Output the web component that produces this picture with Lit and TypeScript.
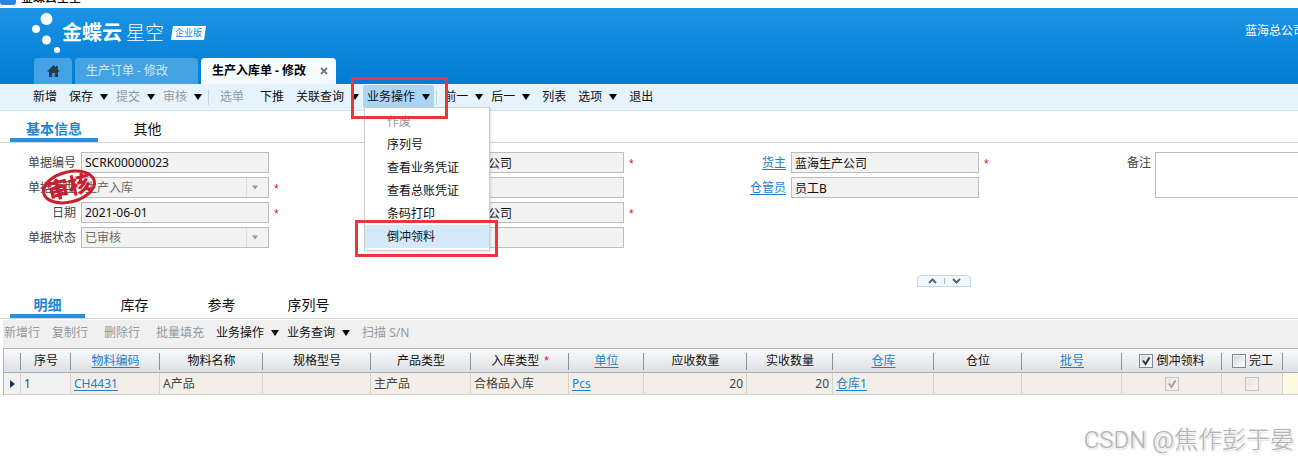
import { LitElement, html, css, nothing } from "lit";
import { customElement, property } from "lit/decorators.js";
import { classMap } from "lit/directives/class-map.js";

const base = css`
  * { box-sizing: border-box; }
  button, input, select, textarea { font: inherit; color: inherit; margin: 0; border-radius: 0; }
  button { background: none; border: 0; padding: 0; cursor: pointer; white-space: nowrap; }
  a { color: #1a82d2; text-decoration: underline; text-underline-offset: 2px; }
`;

interface Command { label: string; drop?: boolean; off?: boolean; sep?: boolean; open?: boolean; tight?: boolean; }

const COMMANDS: Command[] = [
  { label: "新增" },
  { label: "保存", drop: true },
  { label: "提交", drop: true, off: true },
  { label: "审核", drop: true, off: true },
  { label: "", sep: true },
  { label: "选单", off: true },
  { label: "下推" },
  { label: "关联查询", drop: true },
  { label: "业务操作", drop: true, open: true },
  { label: "", sep: true },
  { label: "前一", drop: true },
  { label: "后一", drop: true },
  { label: "列表" },
  { label: "选项", drop: true },
  { label: "退出" },
];

const ROW_COMMANDS: Command[] = [
  { label: "新增行", off: true, tight: true },
  { label: "复制行", off: true },
  { label: "删除行", off: true },
  { label: "批量填充", off: true },
  { label: "业务操作", drop: true },
  { label: "业务查询", drop: true },
  { label: "扫描 S/N", off: true },
];

const MENU = ["作废", "序列号", "查看业务凭证", "查看总账凭证", "条码打印", "倒冲领料"];

@customElement("command-bar")
class CommandBar extends LitElement {
  @property({ attribute: false }) commands: Command[] = [];

  static styles = [base, css`
    :host { display: flex; align-items: center; }
    .cmd { display: flex; align-items: center; gap: 7px; height: 23px; padding: 0 4px; border-radius: 3px; line-height: 24px; }
    .plain { margin: 0 4px; }
    .tight { margin: 0; }
    .off { color: #93999f; }
    .open { background: #abd5f3; }
    .arrow { width: 8px; height: 6px; fill: #000; }
    .sep { width: 1px; height: 15px; margin: 0 3px 0 2px; background: #c5d3de; align-self: center; }
    .holder { position: relative; }
    .menu { position: absolute; z-index: 2; left: 1px; top: 22px; width: 126px; margin: 0; padding: 2px 0; list-style: none; background: #fff; border: 1px solid #c9ced2; box-shadow: 1px 1px 2px rgba(0, 0, 0, .12); }
    .item { position: relative; height: 23px; }
    .item button { width: 100%; height: 23px; padding-left: 22px; text-align: left; line-height: 23px; }
    .current { background: #d4eafa; }
    .mark { position: absolute; z-index: 3; border: 3px solid #e53935; pointer-events: none; }
    .mark-command { left: -12px; top: -8px; width: 97px; height: 42px; }
    .mark-item { left: -10px; top: -5px; width: 143px; height: 37px; }
  `];

  private button(c: Command) {
    return html`<button class=${classMap({ cmd: true, plain: !c.drop, tight: !!c.tight, off: !!c.off, open: !!c.open })}>
      ${c.label}${c.drop ? html`<svg class="arrow" viewBox="0 0 8 6"><path d="M0 0h8L4 6z"/></svg>` : nothing}
    </button>`;
  }

  render() {
    return this.commands.map((c) => {
      if (c.sep) return html`<span class="sep"></span>`;
      if (!c.open) return this.button(c);
      return html`<div class="holder">
        ${this.button(c)}
        <ul class="menu">
          ${MENU.map((m, i) => html`<li class=${classMap({ item: true, off: i === 0, current: i === MENU.length - 1 })}>
            <button>${m}</button>${i === MENU.length - 1 ? html`<span class="mark mark-item"></span>` : nothing}
          </li>`)}
        </ul>
        <span class="mark mark-command"></span>
      </div>`;
    });
  }
}

@customElement("section-tabs")
class SectionTabs extends LitElement {
  @property({ attribute: false }) tabs: string[] = [];

  static styles = [base, css`
    :host { display: flex; gap: 12px; padding: 0 10px; border-bottom: 1px solid #d3d3d3; }
    .tab { min-width: 75px; height: 22px; padding: 0 16px; font-size: 14px; line-height: 18px; border-bottom: 4px solid transparent; }
    .active { color: #1c86d6; font-weight: 700; border-bottom-color: #2390e0; }
  `];

  render() {
    return this.tabs.map((t, i) => html`<button class=${classMap({ tab: true, active: i === 0 })}>${t}</button>`);
  }
}

interface Field { id: string; label?: string; name?: string; value: string; link?: boolean; select?: boolean; required?: boolean; }

const FIELDS: Field[][] = [
  [
    { id: "no", label: "单据编号", value: "SCRK00000023" },
    { id: "type", label: "单据类型", value: "生产入库", select: true, required: true },
    { id: "date", label: "日期", value: "2021-06-01", required: true },
    { id: "state", label: "单据状态", value: "已审核", select: true },
  ],
  [
    { id: "org", name: "生产组织", value: "蓝海生产公司", required: true },
    { id: "shop", name: "生产车间", value: "" },
    { id: "stock", name: "入库组织", value: "蓝海生产公司", required: true },
    { id: "group", name: "库存组", value: "" },
  ],
  [
    { id: "owner", label: "货主", value: "蓝海生产公司", link: true, required: true },
    { id: "keeper", label: "仓管员", value: "员工B", link: true },
  ],
];

@customElement("bill-form")
class BillForm extends LitElement {
  static styles = [base, css`
    :host { display: grid; grid-template-columns: repeat(3, 355px) 1fr; padding-top: 9px; min-height: 132px; position: relative; }
    .col { display: flex; flex-direction: column; gap: 4px; }
    .field { display: grid; grid-template-columns: 76px 188px 1fr; column-gap: 5px; align-items: center; }
    .label { text-align: right; color: #444; line-height: 21px; }
    .box { width: 188px; height: 21px; padding: 0 3px; border: 1px solid #bdbdbd; background: #f2f2f2; color: #111; outline: 0; }
    .pick { appearance: none; opacity: 1; color: #6d6d6d; background: #f2f2f2 url("data:image/svg+xml,%3Csvg xmlns='http://www.w3.org/2000/svg' width='22' height='19'%3E%3Cpath d='M.5 0v19' stroke='%23dcdcdc'/%3E%3Cpath d='M6 7.500h6L9 11.500z' fill='%23999'/%3E%3C/svg%3E") no-repeat right center; }
    .star { height: 21px; color: #d3142b; font-family: "Liberation Sans", sans-serif; line-height: 25px; }
    .note { display: grid; grid-template-columns: 86px 1fr; column-gap: 4px; align-items: start; }
    .memo { width: 100%; height: 46px; border: 1px solid #bdbdbd; border-right: 0; background: #fff; resize: none; display: block; }
    .stamp { position: absolute; left: 40px; top: 24px; width: 58px; height: 40px; }
    .stamp ellipse { fill: none; stroke: #c8202f; stroke-width: 3; }
    .stamp text { fill: #c8202f; font-size: 22px; font-weight: 900; text-anchor: middle; }
  `];

  private field(f: Field) {
    return html`<div class="field">
      ${f.label
        ? html`<label class="label" for=${f.id}>${f.link ? html`<a href="#">${f.label}</a>` : f.label}</label>`
        : html`<span></span>`}
      ${f.select
        ? html`<select class="box pick" id=${f.id} disabled><option>${f.value}</option></select>`
        : html`<input class="box" id=${f.id} aria-label=${f.name ?? nothing} .value=${f.value} readonly>`}
      <span class="star">${f.required ? "*" : nothing}</span>
    </div>`;
  }

  render() {
    return html`
      ${FIELDS.map((col) => html`<div class="col">${col.map((f) => this.field(f))}</div>`)}
      <div class="note"><label class="label" for="memo">备注</label><textarea class="memo" id="memo"></textarea></div>
      <svg class="stamp" viewBox="0 0 58 40">
        <g transform="rotate(-14 29 20)">
          <ellipse cx="29" cy="20" rx="26" ry="15"/>
          <text x="29" y="28">审核</text>
        </g>
      </svg>`;
  }
}

interface Column { title: string; width: number; value?: string; link?: boolean; num?: boolean; required?: boolean; check?: boolean; on?: boolean; }

const COLUMNS: Column[] = [
  { title: "序号", width: 50, value: "1" },
  { title: "物料编码", width: 89, value: "CH4431", link: true },
  { title: "物料名称", width: 103, value: "A产品" },
  { title: "规格型号", width: 108 },
  { title: "产品类型", width: 100, value: "主产品" },
  { title: "入库类型", width: 98, value: "合格品入库", required: true },
  { title: "单位", width: 75, value: "Pcs", link: true },
  { title: "应收数量", width: 103, value: "20", num: true },
  { title: "实收数量", width: 86, value: "20", num: true },
  { title: "仓库", width: 101, value: "仓库1", link: true },
  { title: "仓位", width: 88 },
  { title: "批号", width: 100, link: true },
  { title: "倒冲领料", width: 100, check: true, on: true },
  { title: "完工", width: 61, check: true },
];

@customElement("entry-table")
class EntryTable extends LitElement {
  static styles = [base, css`
    :host { display: block; border: 1px solid #aeb3b8; border-width: 1px 0 0 1px; }
    .grid { width: 100%; table-layout: fixed; border-collapse: separate; border-spacing: 0; }
    .head { height: 24px; padding: 0; font-weight: 400; color: #111; white-space: nowrap; overflow: hidden;
      border-bottom: 1px solid #a9adb2;
      background: linear-gradient(#8d9298, #8d9298) no-repeat right 4px / 1px 17px, linear-gradient(#fafafb, #dde0e4); }
    .headlast { background: linear-gradient(#fafafb, #dde0e4); }
    .cell { height: 22px; padding: 0 3px; color: #444; background: #f3efe8; border-right: 1px solid #d6d4cf; border-bottom: 1px solid #cfcfcf; white-space: nowrap; overflow: hidden; line-height: 21px; }
    .lead { background: #f1f1f1; }
    .fresh { background: #fff8e3; border-right: 0; }
    .num { text-align: right; }
    .mid { text-align: center; }
    .star { color: #d3142b; margin-left: 5px; font-family: "Liberation Sans", sans-serif; }
    .tick { display: flex; align-items: center; justify-content: center; gap: 3px; }
    .check { appearance: none; display: block; width: 14px; height: 14px; border: 1px solid #85898e; background: linear-gradient(135deg, #cfd3d6, #fff); box-shadow: inset 0 0 0 1px #f3f3f3; }
    .check:checked { background: url("data:image/svg+xml,%3Csvg xmlns='http://www.w3.org/2000/svg' width='12' height='12'%3E%3Cpath d='M3 5.500l2.500 3.500L9.500 2.500' fill='none' stroke='%23333' stroke-width='2'/%3E%3C/svg%3E") center no-repeat, linear-gradient(135deg, #cfd3d6, #fff); }
    .check:disabled { opacity: .4; margin: 0 auto; }
    .pointer { width: 5px; height: 8px; fill: #16335f; display: block; margin: 0 auto; }
  `];

  private head(c: Column) {
    if (c.check) return html`<label class="tick"><input class="check" type="checkbox" ?checked=${c.on}>${c.title}</label>`;
    if (c.link) return html`<a href="#">${c.title}</a>`;
    return html`${c.title}${c.required ? html`<span class="star">*</span>` : nothing}`;
  }

  private cell(c: Column) {
    if (c.check) return html`<input class="check" type="checkbox" aria-label=${c.title} ?checked=${c.on} disabled>`;
    return c.link && c.value ? html`<a href="#">${c.value}</a>` : c.value ?? nothing;
  }

  render() {
    return html`<table class="grid">
      <colgroup><col width="17">${COLUMNS.map((c) => html`<col width=${c.width}>`)}<col></colgroup>
      <thead><tr><th class="head"></th>${COLUMNS.map((c) => html`<th class="head">${this.head(c)}</th>`)}<th class="head headlast"></th></tr></thead>
      <tbody><tr>
        <td class="cell lead"><svg class="pointer" viewBox="0 0 5 8"><path d="M0 0l5 4-5 4z"/></svg></td>
        ${COLUMNS.map((c, i) => html`<td class=${classMap({ cell: true, lead: i === 0, num: !!c.num, mid: !!c.check })}>${this.cell(c)}</td>`)}
        <td class="cell fresh"></td>
      </tr></tbody>
    </table>`;
  }
}

@customElement("app-root")
class AppRoot extends LitElement {
  static styles = [base, css`
    :host { display: block; position: relative; overflow: hidden; min-height: 100vh; background: #fff; color: #111;
      font: 12px/16px "Noto Sans", "Noto Sans CJK SC", sans-serif; }
    .title { display: flex; align-items: flex-end; gap: 5px; height: 8px; padding-bottom: 3px; overflow: hidden; color: #000; }
    .title b { line-height: 14px; font-weight: 500; }
    .appicon { width: 16px; height: 16px; flex: none; border-radius: 3px; background: #2a86e2; }
    .banner { display: flex; flex-direction: column; justify-content: space-between; height: 76px; background: linear-gradient(#1d94e7, #0a85da 60%, #007dd2); color: #fff; }
    .brand { display: flex; align-items: center; height: 50px; padding-left: 31px; }
    .dots { width: 31px; height: 44px; fill: #fff; }
    .name { font-size: 20px; line-height: 24px; font-weight: 700; font-style: oblique 6deg; }
    .sub { font-size: 19px; line-height: 24px; font-weight: 300; font-style: oblique 6deg; margin-left: 4px; }
    .edition { position: relative; margin-left: 8px; padding: 0 3px; font-size: 9px; line-height: 14px; font-style: oblique 6deg; color: #1583d3; z-index: 0; }
    .edition::before { content: ""; position: absolute; inset: 0; z-index: -1; background: #fff; transform: skewX(-8deg); }
    .company { margin-left: auto; width: 53px; overflow: hidden; white-space: nowrap; padding-bottom: 4px; }
    .pages { display: flex; gap: 3px; padding-left: 34px; }
    .page { display: flex; align-items: center; height: 26px; padding: 0 11px; border-radius: 4px 4px 0 0; background: #43a3e3; color: #cfe9fb; }
    .home { width: 38px; justify-content: center; }
    .home svg { width: 13px; height: 12px; fill: #2b3a48; }
    .order { width: 123px; }
    .current { width: 135px; background: linear-gradient(#fff, #f2f9fe); color: #000; font-weight: 700; justify-content: space-between; padding-right: 8px; }
    .close { width: 8px; height: 8px; stroke: #777; stroke-width: 2; }
    .main-bar { position: relative; z-index: 1; height: 27px; padding: 1px 0 0 25px; align-items: flex-start; background: #e7f3fc; border-bottom: 1px solid #d2e3f2; }
    .upper { margin-top: 9px; }
    .fold { display: flex; justify-content: center; align-items: center; gap: 7px; width: 54px; height: 12px; margin: 0 0 0 917px; border: 1px solid #bcd9ee; border-radius: 4px 4px 0 0; background: #f2f9fe; }
    .fold button { display: flex; }
    .fold svg { width: 9px; height: 6px; fill: none; stroke: #5b6770; stroke-width: 2; }
    .fold i { width: 1px; height: 6px; background: #a9bccb; }
    .lower { margin-top: 9px; }
    .entry { margin: 1px 0 0 3px; }
    .row-bar { height: 28px; margin-left: -3px; background: linear-gradient(#f0f0f0, #f0f0f0) no-repeat 3px 0; padding-bottom: 3px; }
    .watermark { position: absolute; right: 4px; bottom: 3px; font: 24px/34px Roboto, "Noto Sans CJK SC", sans-serif; font-weight: 300; color: #b4b4b4; text-shadow: 1px 1px 1px #fff, 1px 1px 2px #999; white-space: nowrap; }
  `];

  render() {
    return html`
      <div class="title"><span class="appicon"></span><b>金蝶云星空</b></div>
      <header class="banner">
        <div class="brand">
          <svg class="dots" viewBox="0 0 31 44">
            <circle cx="15.500" cy="8" r="6"/><circle cx="5" cy="18" r="4"/><circle cx="15.500" cy="29" r="4.500"/><circle cx="26" cy="39" r="3"/>
          </svg>
          <span class="name">金蝶云</span><span class="sub">星空</span><span class="edition">企业版</span>
          <span class="company">蓝海总公司</span>
        </div>
        <nav class="pages">
          <button class="page home" aria-label="首页"><svg viewBox="0 0 13 12"><path d="M6.500 0L0 6.500h2V12h3.200V8h2.600v4H11V6.500h2L10.800 4.300V1H9v1.500z"/></svg></button>
          <button class="page order">生产订单 - 修改</button>
          <button class="page current">生产入库单 - 修改<svg class="close" viewBox="0 0 8 8"><path d="M1 1l6 6M7 1L1 7"/></svg></button>
        </nav>
      </header>
      <command-bar class="main-bar" .commands=${COMMANDS}></command-bar>
      <section-tabs class="upper" .tabs=${["基本信息", "其他"]}></section-tabs>
      <bill-form></bill-form>
      <div class="fold">
        <button aria-label="收起"><svg viewBox="0 0 9 6"><path d="M1 5l3.500-3.500L8 5"/></svg></button><i></i>
        <button aria-label="展开"><svg viewBox="0 0 9 6"><path d="M1 1l3.500 3.500L8 1"/></svg></button>
      </div>
      <section-tabs class="lower" .tabs=${["明细", "库存", "参考", "序列号"]}></section-tabs>
      <section class="entry">
        <command-bar class="row-bar" .commands=${ROW_COMMANDS}></command-bar>
        <entry-table></entry-table>
      </section>
      <div class="watermark">CSDN @焦作彭于晏</div>`;
  }
}
